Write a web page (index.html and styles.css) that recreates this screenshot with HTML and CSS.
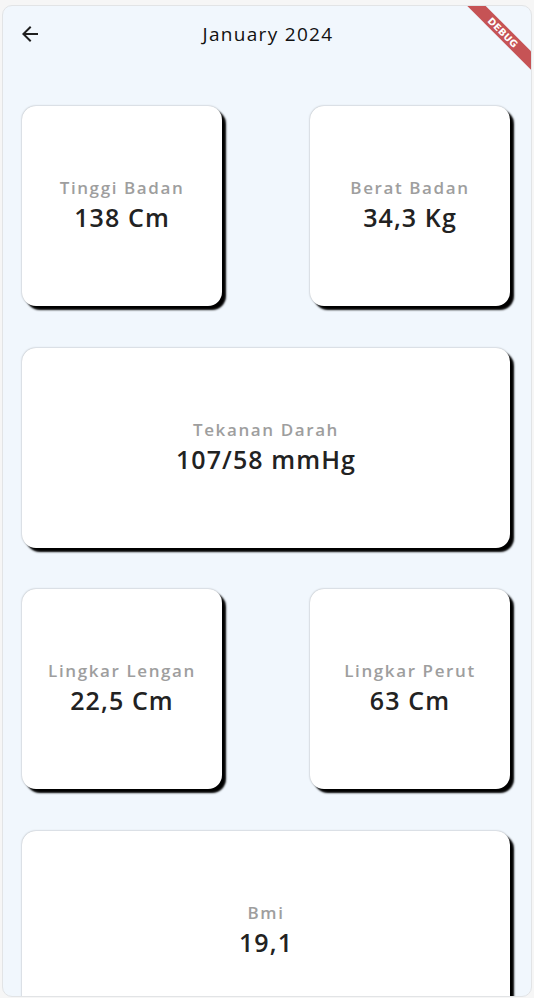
FILE: index.html
```html
<!DOCTYPE html>
<html lang="id">
<head>
<meta charset="utf-8">
<title>January 2024</title>
<link rel="stylesheet" href="styles.css">
</head>
<body>
<div class="screen">
  <header class="appbar">
    <button class="back" aria-label="Kembali">
      <svg width="24" height="24" viewBox="0 0 24 24"><path d="M20 11H7.83l5.59-5.59L12 4l-8 8 8 8 1.41-1.41L7.83 13H20v-2z" fill="#1f1f1f"/></svg>
    </button>
    <h1 class="title">January 2024</h1>
  </header>
  <main class="content">
    <div class="row">
      <div class="card"><span class="label">Tinggi Badan</span><span class="value">138 Cm</span></div>
      <div class="card"><span class="label">Berat Badan</span><span class="value">34,3 Kg</span></div>
    </div>
    <div class="row">
      <div class="card wide"><span class="label">Tekanan Darah</span><span class="value">107/58 mmHg</span></div>
    </div>
    <div class="row">
      <div class="card"><span class="label">Lingkar Lengan</span><span class="value">22,5 Cm</span></div>
      <div class="card"><span class="label">Lingkar Perut</span><span class="value">63 Cm</span></div>
    </div>
    <div class="row">
      <div class="card wide"><span class="label">Bmi</span><span class="value">19,1</span></div>
    </div>
  </main>
  <div class="debug">DEBUG</div>
</div>
</body>
</html>
```
FILE: styles.css
```css
* { box-sizing: border-box; }
html, body { margin: 0; padding: 0; }
body {
  background: #f6f6f6;
  width: 534px;
  height: 998px;
  overflow: hidden;
  font-family: "Open Sans", "DejaVu Sans", sans-serif;
}
.screen {
  position: relative;
  margin: 5px 2px 0 2px;
  height: 992px;
  background: #f1f7fd;
  border: 1px solid #e2e4e6;
  border-radius: 10px;
  overflow: hidden;
}
.appbar {
  height: 56px;
  display: flex;
  align-items: center;
  justify-content: center;
  position: relative;
}
.back {
  position: absolute;
  left: 15px;
  top: 16px;
  width: 24px;
  height: 24px;
  padding: 0;
  border: 0;
  background: none;
  display: flex;
}
.title {
  margin: 0 0 0 2px;
  font-size: 19px;
  font-weight: 400;
  color: #111;
  letter-spacing: 1.3px;
}
.content {
  padding: 44px 21px 0 19px;
  display: flex;
  flex-direction: column;
  gap: 41.5px;
}
.row {
  display: flex;
  justify-content: space-between;
}
.card {
  width: 200px;
  height: 200px;
  background: #fff;
  border-radius: 14px;
  box-shadow: 4px 4px 2px #000, 0 0 2px rgba(0,0,0,0.35);
  display: flex;
  flex-direction: column;
  align-items: center;
  justify-content: center;
}
.card.wide { width: 100%; }
.label {
  font-size: 17px;
  line-height: 24px;
  font-weight: 600;
  color: #9e9e9e;
  letter-spacing: 1.6px;
  margin-top: -2px;
}
.value {
  font-size: 25px;
  line-height: 34px;
  font-weight: 600;
  color: #222;
  letter-spacing: 1.1px;
}
.debug {
  position: absolute;
  top: 20px;
  right: -30px;
  width: 116px;
  height: 13px;
  line-height: 13px;
  transform: rotate(45deg);
  background: rgba(183, 28, 28, 0.75);
  color: #fff;
  font-family: "DejaVu Sans", sans-serif;
  font-size: 9.5px;
  font-weight: 700;
  text-align: center;
  letter-spacing: 0.2px;
}
```
